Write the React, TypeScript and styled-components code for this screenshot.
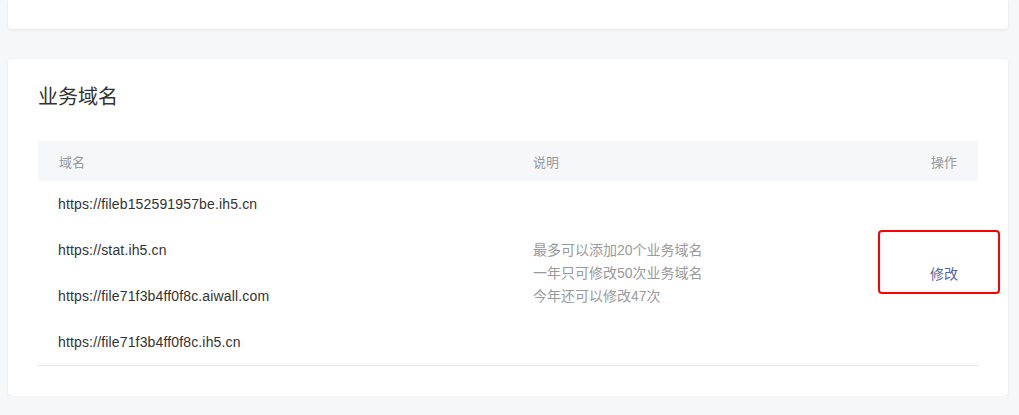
import React from 'react'
import styled, { createGlobalStyle } from 'styled-components'

const GlobalStyle = createGlobalStyle`
  html, body {
    margin: 0;
    padding: 0;
    background: #f6f7f9;
    font-family: "Liberation Sans", "Noto Sans CJK SC", sans-serif;
    color: #333;
  }
`

const Page = styled.div`
  padding: 0 11px 0 8px;
  display: flex;
  flex-direction: column;
  gap: 30px;
`

const TopCard = styled.div`
  height: 29px;
  background: #fff;
  border-radius: 0 0 4px 4px;
  box-shadow: 0 1px 3px rgba(0, 0, 0, 0.08);
`

const Card = styled.section`
  background: #fff;
  border-radius: 4px;
  box-shadow: 0 1px 3px rgba(0, 0, 0, 0.08);
  padding: 24px 30px 30px;
`

const Title = styled.h2`
  margin: 0;
  font-size: 20px;
  font-weight: normal;
  line-height: 26px;
  color: #333;
  font-family: "Noto Sans CJK SC", sans-serif;
`

const Table = styled.div`
  margin-top: 32px;
  display: grid;
  grid-template-columns: 474px 1fr 140px;
  border-bottom: 1px solid #e6e6e6;
`

const HeadCell = styled.div<{ $align?: string }>`
  height: 40px;
  background: #f6f7f9;
  display: flex;
  align-items: center;
  justify-content: ${(p) => p.$align || 'flex-start'};
  padding: 0 21px 0 21px;
  font-size: 13px;
  color: #999;
  font-family: "Noto Sans CJK SC", sans-serif;
`

const DomainList = styled.div`
  display: flex;
  flex-direction: column;
`

const DomainRow = styled.div`
  height: 46px;
  display: flex;
  align-items: center;
  padding-left: 20px;
  font-size: 14px;
  letter-spacing: 0.15px;
  color: #333;
`

const Notes = styled.div`
  display: flex;
  flex-direction: column;
  justify-content: center;
  padding-left: 21px;
  font-size: 14px;
  line-height: 23px;
  color: #9a9a9a;
  font-family: "Liberation Sans", "Noto Sans CJK SC", sans-serif;
`

const ActionCell = styled.div`
  position: relative;
  display: flex;
  align-items: center;
  justify-content: flex-end;
  padding-right: 20px;
`

const EditLink = styled.a`
  font-size: 14px;
  color: #55689f;
  cursor: pointer;
  font-family: "Noto Sans CJK SC", sans-serif;
`

const Highlight = styled.div`
  position: absolute;
  left: 40px;
  right: -22px;
  top: 49px;
  height: 64px;
  box-sizing: border-box;
  border: 2px solid #f00;
  border-radius: 4px;
  pointer-events: none;
`

const domains = [
  'https://fileb152591957be.ih5.cn',
  'https://stat.ih5.cn',
  'https://file71f3b4ff0f8c.aiwall.com',
  'https://file71f3b4ff0f8c.ih5.cn',
]

export default function App() {
  return (
    <>
      <GlobalStyle />
      <Page>
        <TopCard />
        <Card>
          <Title>业务域名</Title>
          <Table>
            <HeadCell>域名</HeadCell>
            <HeadCell>说明</HeadCell>
            <HeadCell $align="flex-end">操作</HeadCell>
            <DomainList>
              {domains.map((d) => (
                <DomainRow key={d}>{d}</DomainRow>
              ))}
            </DomainList>
            <Notes>
              <span>最多可以添加20个业务域名</span>
              <span>一年只可修改50次业务域名</span>
              <span>今年还可以修改47次</span>
            </Notes>
            <ActionCell>
              <EditLink>修改</EditLink>
              <Highlight />
            </ActionCell>
          </Table>
        </Card>
      </Page>
    </>
  )
}
